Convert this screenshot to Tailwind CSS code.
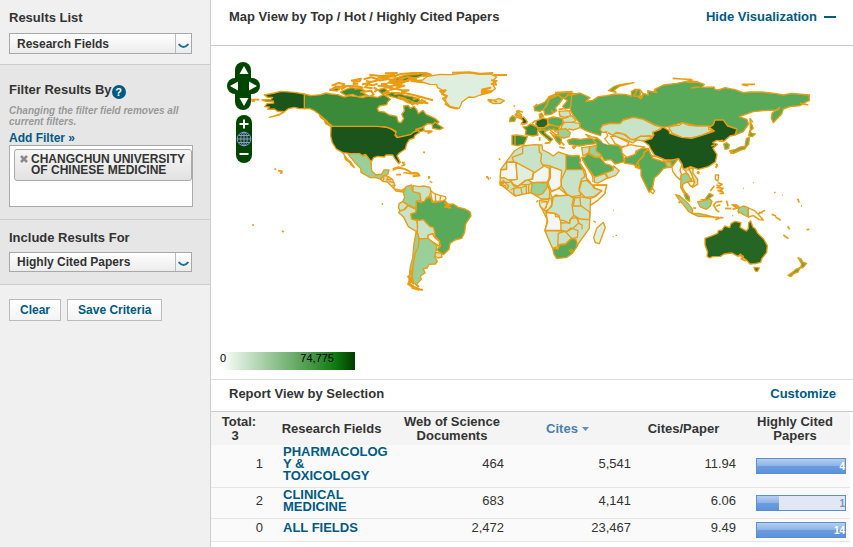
<!DOCTYPE html>
<html lang="en">
<head>
<meta charset="utf-8">
<meta name="viewport" content="width=device-width, initial-scale=1">
<title>Research Fields</title>
<script src="https://cdn.jsdelivr.net/npm/@tailwindcss/browser@4"></script>
</head>
<body class="flex min-h-screen bg-white font-['Liberation_Sans',Arial,sans-serif] text-[13px] text-[#333]">

<aside class="w-[211px] shrink-0 border-r border-[#ccc] bg-[#f0f0f0] font-bold">
  <section class="border-b border-[#ccc] px-[9px] pt-[10px] pb-[10px]">
    <label for="results" class="block leading-4">Results List</label>
    <div class="relative mt-[7px] mr-[9px]">
      <select id="results" class="block h-[21px] w-full appearance-none border border-[#a8a8a8] bg-linear-to-b from-white to-[#ececec] pl-[7px] text-xs font-bold text-[#333]"><option>Research Fields</option></select>
      <span class="pointer-events-none absolute inset-y-px right-px flex w-4 items-center justify-center border-l border-[#bbb]"><svg class="mt-1 h-[6px] w-[11px]" viewBox="0 0 11 6" fill="none" stroke="#1b6f9c" stroke-width="2"><path d="M.7 1Q3 3.900 5.500 4Q8 3.900 10.300 1"/></svg></span>
    </div>
  </section>

  <section class="border-b border-[#ccc] bg-[#e6e6e6] px-[9px] pt-[17px] pb-3">
    <h2 class="flex leading-4">Filter Results By
      <button aria-label="Help" class="mt-[3px] h-[14px] w-[14px] rounded-full bg-[#005a84] text-center text-[11px] leading-[14px] text-white">?</button>
    </h2>
    <p class="mt-[6px] text-[10px] leading-[11px] text-[#999] italic">Changing the filter field removes all current filters.</p>
    <a href="#" class="mt-1 block text-[12px] leading-[14px] text-[#005a84]">Add Filter »</a>
    <div class="mr-2 h-[62px] border border-[#aaa] bg-white pt-[3px] pl-1">
      <div class="flex h-8 gap-[3px] rounded-[3px] border border-[#aaa] bg-linear-to-b from-[#f6f6f6] to-[#e2e2e2] pt-1 pl-[5px] text-xs leading-[11px]">
        <button aria-label="Remove" class="h-[9px] w-2 shrink-0 pt-px"><svg viewBox="0 0 8 8" class="h-2 w-2" stroke="#8a8a8a" stroke-width="2.500"><path d="M1 1L7 7M7 1L1 7"/></svg></button>
        <span>CHANGCHUN UNIVERSITY OF CHINESE MEDICINE</span>
      </div>
    </div>
  </section>

  <section class="border-b border-[#ccc] bg-[#e6e6e6] px-[9px] pt-[10px] pb-3">
    <label for="include" class="block leading-4">Include Results For</label>
    <div class="relative mt-[6px] mr-[9px]">
      <select id="include" class="block h-5 w-full appearance-none border border-[#a8a8a8] bg-linear-to-b from-white to-[#ececec] pl-[7px] text-xs font-bold text-[#333]"><option>Highly Cited Papers</option></select>
      <span class="pointer-events-none absolute inset-y-px right-px flex w-4 items-center justify-center border-l border-[#bbb]"><svg class="mt-1 h-[6px] w-[11px]" viewBox="0 0 11 6" fill="none" stroke="#1b6f9c" stroke-width="2"><path d="M.7 1Q3 3.900 5.500 4Q8 3.900 10.300 1"/></svg></span>
    </div>
  </section>

  <div class="flex gap-[6px] px-[9px] pt-[14px] text-xs text-[#005a84]">
    <button class="h-[22px] border border-[#bbb] bg-linear-to-b from-white to-[#f4f4f4] px-[10px] font-bold">Clear</button>
    <button class="h-[22px] border border-[#bbb] bg-linear-to-b from-white to-[#f4f4f4] px-[10px] font-bold">Save Criteria</button>
  </div>
</aside>

<main class="min-w-0 flex-1">
  <header class="flex justify-between border-b border-[#ccc] pt-[9px] pr-[17px] pb-5 pl-[18px] leading-4 font-bold">
    <h1>Map View by Top / Hot / Highly Cited Papers</h1>
    <a href="#" class="flex items-center gap-[7px] text-[#005a84]">Hide Visualization <span class="h-[2px] w-3 bg-[#005a84]"></span></a>
  </header>

  <section class="relative border-b border-[#ddd]">
    <svg class="block w-full" viewBox="211 46 642 333" role="img" aria-label="World map">
      <g fill="none" stroke="#ec9c10" stroke-width="4" stroke-linejoin="round">
        <!-- North America -->
        <g transform="translate(211 0) scale(.33333)">
          <path fill="#3a8a3a" d="M280 282L300 287 330 284 345 279 360 282 380 284 400 291 415 287 440 290 455 293 470 288 500 292 518 284 528 290 538 298 530 306 527 314 505 318 499 326 503 334 520 336 535 345 557 349 562 366 570 368 578 356 572 343 580 333 578 318 592 316 598 325 609 319 618 330 622 341 636 331 645 343 660 350 673 356 684 366 676 373 650 371 637 380 640 392 625 395 612 402 590 406 560 413 552 402 555 394 540 386 523 381 360 379 344 371 340 360 330 353 325 343 310 332 295 325 280 326Z"/>
          <path fill="#1b551b" d="M280 282L250 277 210 274 190 279 175 282 160 285 170 292 185 292 180 298 153 300 164 304 187 303 188 309 168 311 161 320 175 321 170 328 190 327 200 334 216 334 208 342 190 348 175 352 205 345 222 334 232 326 250 322 265 326 280 326Z"/>
          <path fill="#1b551b" d="M360 379L500 379 530 383 542 388 555 397 552 406 558 413 575 409 598 404 608 396 622 392 626 397 611 407 609 414 595 419 587 432 583 447 565 459 558 467 568 487 563 491 551 475 545 465 525 465 520 471 500 469 488 473 481 485 471 475 463 463 453 467 445 461 415 460 395 458 376 447 364 428 359 408Z"/>
          <path fill="#99d099" d="M410 461L445 461 455 468 465 465 480 485 482 512 495 525 512 522 519 510 534 510 530 524 515 529 510 538 495 533 478 533 450 517 449 506 433 489 424 478Z"/>
          <path fill="#99d099" d="M395 458L409 478 420 487 430 503 421 496 416 487 403 478 400 465Z"/>
          <path fill="#3a8a3a" d="M357 270L370 262 387 266 378 273ZM388 276L405 268 420 263 445 265 462 272 455 278 470 286 440 290 425 283 405 287ZM525 285L542 277 565 279 580 286 600 289 622 296 635 310 615 309 605 315 588 302 570 298 553 293ZM570 296L595 300 608 313 590 308ZM664 376L672 366 683 375 697 384 686 389 665 385ZM500 270L520 264 535 278 515 283ZM540 240L575 228 604 220 650 222 620 232 594 236 580 248 550 252Z"/>
          <path stroke-width="6" d="M362 257L383 249 400 253 392 260 370 259M355 270L382 262 404 258M390 268L408 258 440 259 455 263 430 267M420 242L450 236 446 244 425 246M453 253L475 250 462 262 485 265M448 277L480 272 488 283 478 290M458 238L480 232 507 239 480 246 465 243M475 224L510 228 549 224 530 232 503 231M505 242L530 237 555 241 532 248 574 250M500 257L540 259 555 253 580 257 555 264M510 252L530 252M544 230L570 222 604 219 645 219 660 224 635 229M562 237L590 231 612 235 580 244M535 270L554 266 571 270 593 271 570 276M548 283L580 279 604 284 640 293M605 299L630 291 666 301M620 305L652 310M515 280L535 273M640 394L662 394 650 400M613 390L640 380M340 362L363 378M326 346L350 367"/>
          <path stroke-width="6" d="M466 252L485 256 500 251M488 262L498 269 490 276M425 252L442 251M520 229L556 230M535 243L578 240M560 246L595 242M520 262L548 265M500 232L525 236M588 224L625 222M600 240L618 236M545 256L568 259M522 220L560 219M600 304L622 313M630 299L645 306M560 290L585 296"/>
          <path stroke-width="5" d="M120 299L145 299M122 304L132 302M190 507L196 508M201 512L213 514 211 521M575 487L581 488M577 497L583 492M637 457H641M545 511L560 504 580 507 600 517M585 519L602 521 620 519 626 527 605 529M556 524H570M653 528L656 535"/>
        </g>

        <!-- Greenland and Iceland -->
        <g transform="translate(370 60) scale(.33333)">
          <path fill="#dfefdf" d="M130 63L158 60 170 50 210 43 245 44 290 38 330 43 360 42 380 51 370 61 378 70 370 76 376 86 360 98 330 105 312 112 296 111 276 126 268 145 240 140 225 122 230 110 211 96 216 90 202 82 200 74 180 73 155 66Z"/>
          <path fill="#c9e3c9" d="M354 121L376 120 386 115 403 122 391 130 370 131Z"/>
          <path stroke-width="6" d="M122 63L158 67M208 93L227 91 216 102 231 108 219 116 229 126M224 130L242 142 264 146M363 61L380 63 365 72 381 74M334 89L361 83 335 94 365 94 333 99M246 38L298 37 330 41 370 39M370 45L411 45"/>
          <path stroke-width="4" d="M353 119L365 120 360 128M160 277H164M388 295V299M348 350L358 355"/>
        </g>

        <!-- South and Central America -->
        <g transform="translate(340 150) scale(.33333)">
          <path fill="#c9e3c9" d="M122 88L132 76 145 80 157 88 165 105 160 116 185 121 200 112 190 126 168 123 156 110 142 96 128 94Z"/>
          <path d="M132 78L130 92M145 80L140 90 155 88M146 94L163 98M157 106L165 107"/>
          <path fill="#58aa58" d="M230 152L243 158 255 147 272 141 277 158 300 155 312 148 325 163 340 162 355 172 372 176 390 185 393 198 377 222 374 247 365 265 345 270 330 280 327 298 310 314 290 300 301 289 298 272 285 260 284 246 270 230 250 215 230 210 215 209 211 194 228 181Z"/>
          <path fill="#99d099" d="M198 110L215 105 218 124 240 130 243 153 229 153 228 175 205 165 188 155 194 142 190 128Z"/>
          <path fill="#c9e3c9" d="M219 107L238 110 250 108 270 112 273 125 268 139 260 143 253 154 243 155 240 130 219 125ZM178 160L188 155 204 165 194 177 181 183 175 173ZM180 183L195 178 204 167 228 178 227 187 212 192 215 207 230 212 233 229 231 246 205 230 190 200 176 188ZM232 212L250 209 270 230 280 232 285 250 265 255 263 265 238 267 232 247ZM288 307L304 310 306 321 294 324 284 318Z"/>
          <path fill="#eff6ef" d="M272 122L284 131 300 136 316 140 318 147 308 153 285 154 277 153 274 139ZM264 256L277 251 285 264 298 274 298 289 285 280 265 268Z"/>
          <path d="M286 133L287 153M302 136L300 152"/>
          <path fill="#99d099" d="M237 267L264 265 283 281 291 289 287 306 284 320 292 334 286 342 267 343 262 354 250 356 255 369 241 378 244 388 229 404 215 394 218 352 226 309 235 290ZM228 247L233 250 237 270 235 290 226 309 219 350 217 378 221 402 207 392 211 350 218 323 222 280Z"/>
          <path stroke-width="9" d="M204 377L213 389 206 401 220 411 238 419M211 360L215 372"/>
          <path stroke-width="6" d="M215 414L249 420M228 403L237 411M313 159L330 165 315 170 333 173"/>
          <path stroke-width="4" d="M127 159V165M158 56L175 51 195 57 207 62M190 69L200 68M213 69L225 67 237 73 218 76M266 78V86M269 94L277 98M186 36L192 44 184 49M439 81L442 80 447 90M251 7H255"/>
        </g>

        <!-- Europe -->
        <g transform="translate(490 75) scale(.33333)">
          <path fill="#58aa58" d="M132 95L150 88 165 81 177 66 200 55 235 52 259 57 246 65 250 84 247 98 225 102 218 94 232 77 220 68 208 86 196 98 200 107 183 118 165 120 161 104 149 109 134 107Z"/>
          <path stroke-width="5" d="M162 102L171 89 177 73 205 60 218 70M224 69L236 58 247 62M175 66L198 59M195 53L248 50"/>
          <path fill="#58aa58" d="M60 129L68 122 78 128 74 139 59 140ZM174 130L190 126 217 130 219 148 207 155 181 150 174 143ZM148 118L155 114 160 123 150 130ZM140 156L160 158 184 149 208 157 205 167 180 163 164 170 145 165Z"/>
          <path fill="#c9e3c9" d="M207 109L238 107 242 122 228 129 210 123ZM217 132L228 126 245 122 258 137 247 142 221 142ZM217 149L225 142 249 142 270 146 270 158 250 165 238 162 228 167 212 161Z"/>
          <path fill="#99d099" d="M205 164L228 161 241 173 238 185 222 189 205 184ZM75 119L85 111 95 119 93 132 82 127Z"/>
          <path fill="#1b551b" d="M92 129L101 126 112 140 109 145 93 147 99 138Z"/>
          <path fill="#256625" d="M139 137L151 133 158 129 172 132 174 148 163 158 145 158 137 149Z"/>
          <path fill="#3a8a3a" d="M99 156L112 154 120 147 130 150 144 159 142 172 144 180 128 183 106 179 108 165ZM66 181L80 180 112 185 108 195 102 208 82 212 66 209ZM145 167L164 164 165 175 177 184 188 193 181 200 170 190 154 177Z"/>
          <path d="M75 183L75 209M126 148L140 155M152 158L150 165M180 164L188 172 200 180M190 158L195 170 205 172M207 176L194 182"/>
          <path fill="#58aa58" d="M190 180L205 184 215 193 210 209 198 197ZM232 196L250 190 272 193 300 189 316 192 318 206 290 209 268 213 238 208Z"/>
          <path fill="#c9e3c9" d="M287 178L305 185 321 189 316 195 298 188ZM247 216L258 214 251 221Z"/>
          <path stroke-width="5" d="M78 111L85 107 99 112M77 118L93 125M164 205L181 203M149 186V198M208 216L224 220M180 171L199 194M212 199L223 211M96 149L112 144M126 145L137 136M132 96L142 87M147 120L162 124M73 91V95M183 106L190 111M206 104L221 101"/>
        </g>

        <!-- Africa and the Middle East -->
        <g transform="translate(490 130) scale(.33333)">
          <path fill="#c9e3c9" d="M98 48L132 44 156 45 158 60 175 68 190 78 205 66 228 74 285 118 290 145 305 165 350 165 344 191 301 226 298 295 262 345 203 350 188 355 165 302 172 270 150 225 154 207 122 188 75 198 30 162 32 118 73 63Z"/>
          <path d="M98 50L98 70 66 82M66 82L72 95 50 97 50 117 31 120M147 45L148 66 155 73M155 70L152 94 160 108M158 104L180 108 215 122"/>
          <path fill="#f3f6f3" d="M32 120L50 118 50 97 78 97 82 148 55 150 42 143 31 144ZM112 149L128 147 130 130 163 108 178 115 178 142 172 156 127 158ZM181 109L215 122 213 149 214 168 200 178 184 183 174 158 181 144ZM180 187L207 175 231 194 217 199 197 195 187 204ZM350 165L344 191 322 212 301 226 302 205 316 200 335 182 315 175 311 166ZM168 248L195 250 197 260 212 262 213 301 165 301 173 275Z"/>
          <path fill="#dfefdf" d="M78 97L130 125 126 147 106 151 84 169 70 163 62 151 82 148ZM148 211L170 209 183 204 186 222 177 239 165 243 150 228Z"/>
          <path fill="#58aa58" d="M228 74L247 78 267 76 272 91 269 99 280 119 228 119ZM188 355L204 357 208 343 225 344 245 325 258 328 263 347 247 370 231 382 200 386 192 373Z"/>
          <path fill="#c9e3c9" d="M228 119L279 119 285 139 274 148 267 176 272 196 245 200 230 192 214 169 214 149ZM190 200L235 195 251 205 246 225 251 257 240 270 239 280 222 272 210 270 207 257 195 250 168 246 185 229ZM275 154L290 151 306 165 311 174 335 182 312 200 285 202 267 183ZM165 302L225 303 205 310 203 350 188 355 179 336Z"/>
          <path fill="#99d099" d="M126 159L144 157 157 159 172 157 172 171 158 191 148 195 136 194 123 188Z"/>
          <path d="M60 151L72 168 84 169 109 151M72 174L71 191 80 198M72 174L93 173 96 193M96 172L109 167 109 193M116 164V192M62 180L73 174M34 157L60 157M31 166L45 166 50 178M38 150L56 168 50 180M90 164L119 163 126 157M174 168L179 183 178 207 154 207M153 216L172 215 168 235M177 210L163 240M250 204L270 202 272 228 248 228M254 207L250 225M271 200L300 206M271 226L300 247 298 269M251 256L270 267 298 269M212 279L239 278 242 266 259 263 267 278 250 294 229 306 212 301M227 307L243 294 264 302 262 322 246 326 227 306M243 326L227 341 205 345M263 265L267 280 276 285 276 298"/>
          <path stroke-width="8" d="M29 156L42 160M29 163L38 164"/>
          <path d="M240 357L249 361 243 366 236 361M257 343L262 346"/>
          <path fill="#dfefdf" d="M340 277L346 293 337 316 328 341 316 338 311 323 320 295Z"/>
          <path fill="#58aa58" d="M275 82L285 81 293 70 315 82 331 83 345 101 362 106 370 113 365 125 347 129 325 139 313 140 302 126 287 106Z"/>
          <path fill="#c9e3c9" d="M312 142L347 130 354 143 325 159 314 158ZM345 130L369 121 371 108 388 122 377 136 353 145ZM275 53L299 50 296 68 279 78Z"/>
          <path fill="#99d099" d="M300 50L319 46 326 57 334 65 335 79 318 82 297 69Z"/>
          <path stroke="#fff" stroke-width="6" d="M274 97L290 122 302 148"/>
          <path d="M278 90L292 113 308 139 309 157M270 99L285 122 290 145 302 158"/>
          <path stroke-width="4" d="M28 86L31 89M0 144H3M139 217L144 211M310 273L318 277M369 241H371M368 320H371M377 316H381"/>
        </g>

        <!-- Asia -->
        <g transform="translate(600 70) scale(.33333)">
          <path fill="#58aa58" d="M-85 75L-60 69 -30 83 -42 94 -22 91 -5 80 20 77 45 72 75 73 95 78 94 65 105 58 120 58 121 73 116 83 125 85 130 70 145 75 143 62 170 68 164 58 190 45 230 40 270 32 290 35 313 43 305 52 342 51 345 58 355 60 375 53 405 59 430 68 450 66 485 66 530 71 550 75 575 70 628 75 628 92 620 95 600 107 570 110 550 117 545 132 520 158 514 145 516 130 539 112 535 120 490 122 460 125 418 140 440 148 446 162 430 185 405 195 410 178 385 168 360 150 345 155 340 170 290 168 247 158 206 170 188 172 165 165 130 148 100 142 70 150 60 160 30 160 8 165 3 178 12 200 -20 190 -43 182 -60 172 -60 160 -80 137 -89 121Z"/>
          <path fill="#58aa58" d="M25 62L41 50 60 44 102 38 60 48 42 61 48 67ZM450 145L453 159 460 175 451 182ZM-10 222L-20 210 -9 204 12 220 30 224 57 226 65 238 73 275 45 282 33 269 13 271 0 251 -12 242ZM75 262L105 252 119 233 146 236 132 247 130 258 113 275 118 292 99 283 73 279ZM146 238L153 254 163 263 193 274 215 270 235 265 229 280 208 292 191 295 176 313 163 324 158 353 147 367 139 350 123 317 123 298 105 291 115 274 131 258 132 248Z"/>
          <path fill="#c9e3c9" d="M8 166L30 160 60 161 70 150 100 142 130 148 165 166 188 172 175 180 158 188 161 200 147 197 121 199 103 209 90 207 68 191 50 187 38 196 18 185 10 190 0 178ZM205 171L225 167 238 166 247 158 263 165 290 168 327 168 326 178 340 181 300 198 273 204 245 202 217 190ZM38 195L50 189 75 193 92 208 110 211 99 219 82 211 60 204ZM103 208L122 198 151 200 155 206 134 214Z"/>
          <path fill="#f3f6f3" d="M32 199L48 199 64 207 87 218 80 228 64 230 45 221ZM65 233L92 224 111 228 134 231 108 243 105 253 80 262 66 249ZM235 265L246 284 240 300 245 315 240 329 228 318 218 304 216 291Z"/>
          <path fill="#1b551b" d="M129 213L155 206 162 195 158 187 180 179 188 171 207 181 209 190 245 202 275 205 303 197 326 189 343 183 328 172 340 164 345 150 370 150 383 168 411 177 405 195 390 198 370 215 350 211 338 218 353 223 339 235 351 254 346 276 325 290 295 298 272 290 250 298 246 282 236 266 216 270 194 269 164 256 151 236 147 226Z"/>
          <path fill="#dfefdf" d="M155 258L170 260 193 269 190 275 160 266Z"/>
          <path fill="#99d099" d="M195 275L212 276 214 292 202 291Z"/>
          <path fill="#58aa58" d="M371 222L380 218 388 224 386 236 375 238ZM391 243L407 238 420 231 435 229 439 206 449 201 446 222 434 237 416 242 399 250ZM449 182L455 190 466 192 456 200 446 197Z"/>
          <path stroke-width="5" d="M218 25L247 27 275 29 260 36 294 37M425 43L465 43M428 45L445 47M104 58L111 62 101 78 122 79M122 61L129 72 120 87M167 58L160 68M273 54L300 51M389 240L394 252M347 283L352 286 348 292M293 304L297 309M600 99L625 105M451 147L458 157M370 211L357 213M345 224L334 228"/>
          <path stroke="#fff" fill="#fff" stroke-width="5" d="M7 190L21 188 22 199 14 207 25 222 10 217 5 203Z"/>
          <path d="M5 187L20 187 23 198 14 206 28 224"/>
        </g>

        <!-- South-east Asia and Oceania -->
        <g transform="translate(630 150) scale(.33333)">
          <path fill="#99d099" d="M153 76L166 69 183 80 184 93 167 98 158 103 158 114 168 130 160 127 152 112ZM137 134L149 138 172 158 188 178 187 190 176 185 160 164 147 149ZM185 190L205 190 227 195 250 201 205 199ZM203 155L218 153 233 143 240 148 246 154 241 169 229 178 211 171ZM306 164L321 165 329 173 340 168 355 173 355 201 342 195 324 184 326 176Z"/>
          <path fill="#eff6ef" d="M355 174L373 181 383 191 400 210 387 209 370 197 355 201ZM66 113L74 123 69 131 62 125ZM164 61L178 59 189 79 184 91 175 74ZM173 96L190 93 195 102 183 110ZM256 75L266 75 264 93 256 88Z"/>
          <path fill="#c9e3c9" d="M176 55L190 55 188 68 203 88 203 103 187 112 194 97 185 73Z"/>
          <path fill="#58aa58" d="M162 132L170 130 178 141 179 154 168 147ZM213 149L225 148 238 130 250 136 231 150ZM504 323L513 327 519 337 530 340 519 353 511 354 515 342ZM511 352L504 366 493 370 482 380 474 376 487 367 499 357Z"/>
          <path fill="#256625" d="M225 265L247 257 263 250 265 242 276 240 284 228 299 233 303 221 315 214 333 218 330 232 349 243 355 236 356 218 362 212 368 230 377 238 383 250 401 267 412 287 410 307 396 325 392 337 376 341 360 342 350 331 339 323 332 312 324 319 306 309 282 312 271 319 248 320 238 324 231 319 233 306 225 284ZM372 352L388 354 382 364 376 363Z"/>
          <path stroke-width="5" d="M200 69L207 67 205 73M259 41L262 46 257 54M263 98L276 103 268 108 259 105M259 112L279 115 273 120 264 122 277 124 280 130 268 130M253 107L241 123M277 154L259 156 251 165 260 181 268 186M259 169L271 164M290 152L294 169M285 175L304 176M309 166L321 174 308 178M145 155L151 159M190 173L198 175M249 202H266M272 202L280 204M256 209L275 202M384 192L405 181M387 188L398 188M425 193L438 198M436 200L452 211M473 229L479 238M460 255L475 266M530 239L538 238M328 317L340 319 334 327 348 333M328 187L324 190M307 196L309 197M370 97L372 98M339 115H341M433 126L436 129M457 135H459M502 146L505 150 507 158M513 167L516 168M302 0L310 10 330 1"/>
        </g>
        <path stroke-width="1.500" d="M252 225H254M282 231L284 232M280 173H282M494 101L497 102"/>
      </g>
    </svg>

    <div class="absolute top-4 left-4 flex flex-col items-center gap-[5px]" aria-label="Map controls">
      <div class="relative h-12 w-[33px]">
        <svg class="absolute inset-0 h-12 w-[33px]" viewBox="0 0 33 48" fill="#004600"><rect x="8" width="16" height="48" rx="8"/><rect y="16" width="33" height="16" rx="8"/></svg>
        <div class="relative flex h-12 flex-col items-center justify-between">
          <button aria-label="Pan up" class="h-4 w-4"><svg viewBox="0 0 16 16"><path fill="#fff" d="M8 4L12.500 12H3.500Z"/></svg></button>
          <div class="flex w-full justify-between"><button aria-label="Pan left" class="h-4 w-4"><svg viewBox="0 0 16 16"><path fill="#fff" d="M3 8L11 3.500V12.500Z"/></svg></button><button aria-label="Pan right" class="h-4 w-4"><svg viewBox="0 0 16 16"><path fill="#fff" d="M13 8L5 3.500V12.500Z"/></svg></button></div>
          <button aria-label="Pan down" class="h-4 w-4"><svg viewBox="0 0 16 16"><path fill="#fff" d="M8 12L3.500 4H12.500Z"/></svg></button>
        </div>
      </div>
      <div class="flex w-4 flex-col rounded-full bg-[#004600]">
        <button aria-label="Zoom in" class="h-4 w-4"><svg viewBox="0 0 16 16" stroke="#fff" stroke-width="2"><path d="M3.500 9H12.500M8 4.500V13.500"/></svg></button>
        <button aria-label="Whole world" class="h-4 w-4"><svg viewBox="0 0 16 16" fill="none" stroke="#9494e0"><circle cx="8" cy="8" r="6.800"/><ellipse cx="8" cy="8" rx="3.200" ry="6.800"/><path d="M8 1V15M1 8H15M2.500 4.500H13.500M2.500 11.500H13.500"/></svg></button>
        <button aria-label="Zoom out" class="h-4 w-4"><svg viewBox="0 0 16 16" stroke="#fff" stroke-width="2"><path d="M3.500 7H12.500"/></svg></button>
      </div>
    </div>

    <div class="absolute bottom-[9px] left-[10px] flex h-[18px] w-[134px] justify-between bg-[linear-gradient(90deg,#fff,#4d9c4d_65%,#107a10_85%,#003c00)] pr-[21px] text-[11px] leading-[13px] text-black"><span class="-ml-px">0</span><span>74,775</span></div>
  </section>

  <section>
    <header class="flex justify-between border-b border-[#ccc] pt-[6px] pr-[17px] pb-[9px] pl-[18px] leading-4 font-bold">
      <h2>Report View by Selection</h2>
      <a href="#" class="text-[#005a84]">Customize</a>
    </header>
    <div class="pr-[3px]">
      <table class="w-full table-fixed border-collapse text-right leading-3">
        <colgroup><col class="w-[56px]"><col class="w-[129px]"><col class="w-[112px]"><col class="w-[127px]"><col class="w-[105px]"><col class="w-[110px]"></colgroup>
        <thead class="bg-[#f4f4f4] text-center leading-[14px]">
          <tr class="h-[33px]">
            <th>Total:<br><span class="pr-2">3</span></th>
            <th>Research Fields</th>
            <th class="px-2">Web of Science Documents</th>
            <th class="pr-2 text-[#4a7eb0]"><button class="inline-flex items-center gap-1 font-bold">Cites <svg class="h-1 w-[7px]" viewBox="0 0 7 4"><path fill="#5b90d0" d="M0 0H7L3.500 4Z"/></svg></button></th>
            <th class="pr-2">Cites/Paper</th>
            <th class="px-4">Highly Cited Papers</th>
          </tr>
        </thead>
        <tbody class="bg-[#fafafa]">
          <tr class="h-[42px] border-b border-[#e6e6e6]">
            <td class="pr-1 pb-1">1</td>
            <td class="pr-2 pb-1 pl-4 text-left wrap-anywhere"><a href="#" class="font-bold text-[#005a84]">PHARMACOLOGY &amp; TOXICOLOGY</a></td>
            <td class="pr-1 pb-1">464</td><td class="pr-1 pb-1">5,541</td><td class="pr-1 pb-1">11.94</td>
            <td class="pr-1 pl-4"><div class="h-4 border border-[#5b8fd0] bg-[linear-gradient(#b4cef0,#8db2e6_50%,#6c9dde_50%,#5b92da)] text-[10px] leading-4 font-bold text-white">4</div></td>
          </tr>
          <tr class="h-[31px] border-b border-[#e6e6e6]">
            <td class="pr-1 pb-1">2</td>
            <td class="pr-2 pb-1 pl-4 text-left"><a href="#" class="font-bold text-[#005a84]">CLINICAL MEDICINE</a></td>
            <td class="pr-1 pb-1">683</td><td class="pr-1 pb-1">4,141</td><td class="pr-1 pb-1">6.06</td>
            <td class="pr-1 pl-4"><div class="flex h-4 justify-between border border-[#5b8fd0] bg-[#e1e8f4] text-[10px] leading-4 font-bold text-[#7a94bc]"><span class="bg-[linear-gradient(#b4cef0,#8db2e6_50%,#6c9dde_50%,#5b92da)]" style="width:25%"></span>1</div></td>
          </tr>
          <tr class="h-[23px] border-b border-[#e6e6e6]">
            <td class="pr-1 pb-1">0</td>
            <td class="pr-2 pb-1 pl-4 text-left"><a href="#" class="font-bold text-[#005a84]">ALL FIELDS</a></td>
            <td class="pr-1 pb-1">2,472</td><td class="pr-1 pb-1">23,467</td><td class="pr-1 pb-1">9.49</td>
            <td class="pr-1 pl-4"><div class="h-4 border border-[#5b8fd0] bg-[linear-gradient(#b4cef0,#8db2e6_50%,#6c9dde_50%,#5b92da)] text-[10px] leading-4 font-bold text-white">14</div></td>
          </tr>
        </tbody>
      </table>
    </div>
  </section>
</main>
</body>
</html>
